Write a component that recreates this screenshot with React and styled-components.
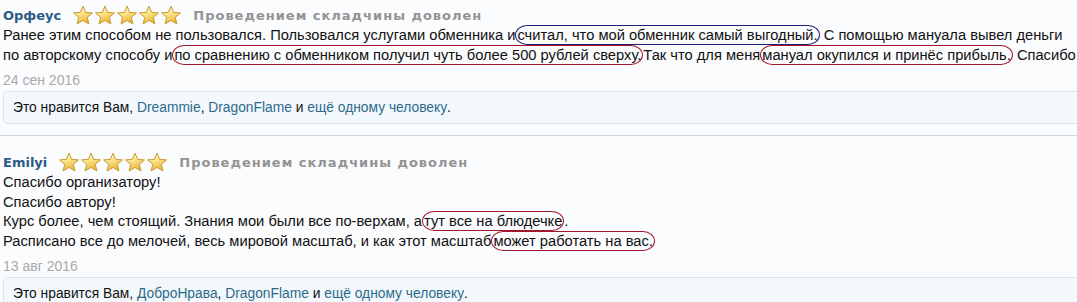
import styled, { createGlobalStyle } from "styled-components";

const GlobalStyle = createGlobalStyle`
  body {
    margin: 0;
    background: #fbfcfe;
    font-family: "Liberation Sans", Arial, sans-serif;
    font-size: 14px;
    color: #111;
  }
`;

const Page = styled.div`
  width: 1077px;
  height: 302px;
  overflow: hidden;
`;

const Post = styled.article`
  padding: ${({ $first }) => ($first ? "5px" : "16px")} 0 11px 3px;
  border-bottom: ${({ $last }) => ($last ? "none" : "1px solid #cdd5de")};
`;

const Header = styled.div`
  display: flex;
  align-items: center;
  height: 20px;
`;

const Name = styled.a`
  font-family: "DejaVu Sans", Verdana, sans-serif;
  font-weight: bold;
  font-size: 13px;
  color: #2c5b86;
  text-decoration: none;
  margin-right: 11px;
`;

const Stars = styled.div`
  display: flex;
  margin-right: 11px;
`;

const Title = styled.span`
  font-family: "DejaVu Sans", Verdana, sans-serif;
  font-weight: bold;
  font-size: 13px;
  letter-spacing: 1px;
  color: #939393;
`;

const Body = styled.div`
  margin-top: 1px;
  font-size: 14.7px;
  line-height: 19.5px;
  white-space: nowrap;
`;

const Mark = styled.span`
  border: 1px solid ${({ $color }) => $color};
  border-radius: 12px / 10px;
  padding: 1px 1px;
`;

const Date = styled.div`
  color: #a9a9a9;
  line-height: 20px;
  margin-top: 5px;
`;

const Likes = styled.div`
  margin-top: 1px;
  height: 31px;
  display: flex;
  align-items: center;
  padding-left: 9px;
  font-size: 13.8px;
  background: #f3f8fc;
  border: 1px solid #d9e4ed;
  border-right: none;
  border-radius: 5px 0 0 5px;
  white-space: nowrap;
`;

const Link = styled.a`
  color: #2d6a8a;
  text-decoration: none;
`;

const Star = () => (
  <svg width="22" height="21" viewBox="0 0 22 21">
    <defs>
      <linearGradient id="sg" x1="0" y1="0" x2="0.4" y2="1">
        <stop offset="0" stopColor="#fffbe0" />
        <stop offset="0.5" stopColor="#fbe48a" />
        <stop offset="1" stopColor="#e9b53a" />
      </linearGradient>
    </defs>
    <path
      d="M11 1.2 L13.7 7.4 L20.5 7.9 L15.3 12.3 L16.9 19 L11 15.4 L5.1 19 L6.7 12.3 L1.5 7.9 L8.3 7.4 Z"
      fill="url(#sg)"
      stroke="#c99a2e"
      strokeWidth="1"
      strokeLinejoin="round"
    />
  </svg>
);

const FiveStars = () => (
  <Stars>
    {[0, 1, 2, 3, 4].map((i) => (
      <Star key={i} />
    ))}
  </Stars>
);

const RED = "#a3172b";
const BLUE = "#1d1d78";

const App = () => {
  return (
    <Page>
      <GlobalStyle />
      <Post $first>
        <Header>
          <Name href="#">Орфеус</Name>
          <FiveStars />
          <Title>Проведением складчины доволен</Title>
        </Header>
        <Body>
          Ранее этим способом не пользовался. Пользовался услугами обменника и
          <Mark $color={BLUE}>считал, что мой обменник самый выгодный.</Mark> С
          помощью мануала вывел деньги
          <br />
          по авторскому способу и
          <Mark $color={RED}>по сравнению с обменником получил чуть более 500 рублей сверху.</Mark>
          Так что для меня
          <Mark $color={RED}>мануал окупился и принёс прибыль.</Mark> Спасибо
        </Body>
        <Date>24 сен 2016</Date>
        <Likes>
          Это нравится Вам,&nbsp;<Link href="#">Dreammie</Link>,&nbsp;
          <Link href="#">DragonFlame</Link>&nbsp;и&nbsp;
          <Link href="#">ещё одному человеку</Link>.
        </Likes>
      </Post>
      <Post $last>
        <Header>
          <Name href="#">Emilyi</Name>
          <FiveStars />
          <Title>Проведением складчины доволен</Title>
        </Header>
        <Body>
          Спасибо организатору!
          <br />
          Спасибо автору!
          <br />
          Курс более, чем стоящий. Знания мои были все по-верхам, а
          <Mark $color={RED}>тут все на блюдечке</Mark>.
          <br />
          Расписано все до мелочей, весь мировой масштаб, и как этот масштаб
          <Mark $color={RED}>может работать на вас.</Mark>
        </Body>
        <Date>13 авг 2016</Date>
        <Likes>
          Это нравится Вам,&nbsp;<Link href="#">ДоброНрава</Link>,&nbsp;
          <Link href="#">DragonFlame</Link>&nbsp;и&nbsp;
          <Link href="#">ещё одному человеку</Link>.
        </Likes>
      </Post>
    </Page>
  );
};

export default App;
